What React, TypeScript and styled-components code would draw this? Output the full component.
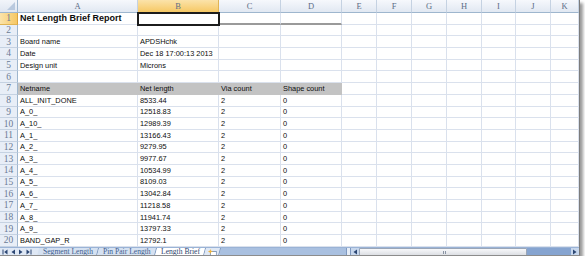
import { Fragment } from "react";
import styled, { createGlobalStyle } from "styled-components";

const GlobalStyle = createGlobalStyle`
  body {
    margin: 0;
    background: #ffffff;
    font-family: "Liberation Sans", Arial, sans-serif;
  }
`;

const COLUMNS = [
  { key: "A", width: 120 },
  { key: "B", width: 81 },
  { key: "C", width: 62 },
  { key: "D", width: 61 },
  { key: "E", width: 35 },
  { key: "F", width: 35 },
  { key: "G", width: 35 },
  { key: "H", width: 35 },
  { key: "I", width: 34 },
  { key: "J", width: 35 },
  { key: "K", width: 28 },
];

const nets: [string, string][] = [
  ["ALL_INIT_DONE", "8533.44"],
  ["A_0_", "12518.83"],
  ["A_10_", "12989.39"],
  ["A_1_", "13166.43"],
  ["A_2_", "9279.95"],
  ["A_3_", "9977.67"],
  ["A_4_", "10534.99"],
  ["A_5_", "8109.03"],
  ["A_6_", "13042.84"],
  ["A_7_", "11218.58"],
  ["A_8_", "11941.74"],
  ["A_9_", "13797.33"],
  ["BAND_GAP_R", "12792.1"],
];

const ROWS: string[][] = [
  ["Net Length Brief Report"],
  [],
  ["Board name", "APDSHchk"],
  ["Date", "Dec 18 17:00:13 2013"],
  ["Design unit", "Microns"],
  [],
  ["Netname", "Net length", "Via count", "Shape count"],
  ...nets.map(([name, len]) => [name, len, "2", "0"]),
];

const Frame = styled.div`
  width: 579px;
  height: 255px;
  border-right: 1px solid #7c7c7c;
  border-bottom: 1px solid #8c8c8c;
  box-shadow: 3px 3px 3px rgba(0, 0, 0, 0.4);
  background: #fff;
  display: flex;
  flex-direction: column;
  overflow: hidden;
`;

const Sheet = styled.div`
  display: grid;
  grid-template-columns: 18px ${COLUMNS.map((c) => `${c.width}px`).join(" ")};
  grid-template-rows: 13px repeat(20, 11.7px);
`;

const Corner = styled.div`
  position: relative;
  background: linear-gradient(#f2f5fa, #dfe6f1);
  border-right: 1px solid #9eb6ce;
  border-bottom: 1px solid #9eb6ce;

  &::after {
    content: "";
    position: absolute;
    right: 2px;
    bottom: 2px;
    border-left: 8px solid transparent;
    border-bottom: 8px solid #b9c9de;
  }
`;

const ColHead = styled.div<{ $active?: boolean }>`
  display: flex;
  align-items: center;
  justify-content: center;
  font-family: "Liberation Serif", "DejaVu Serif", serif;
  font-size: 8.5px;
  color: #5d6d86;
  background: ${(p) =>
    p.$active
      ? "linear-gradient(#fbe3aa, #f6c864)"
      : "linear-gradient(#f6f8fc, #e1e8f2)"};
  border-right: 1px solid ${(p) => (p.$active ? "#e0b454" : "#c5d2e2")};
  border-bottom: 1px solid ${(p) => (p.$active ? "#d9a441" : "#9eb6ce")};
`;

const RowHead = styled.div<{ $active?: boolean }>`
  display: flex;
  align-items: center;
  justify-content: center;
  font-family: "Liberation Serif", "DejaVu Serif", serif;
  font-size: 9.5px;
  color: #6a7a94;
  background: ${(p) =>
    p.$active ? "linear-gradient(90deg, #fbe3aa, #f6c864)" : "#e8eef7"};
  border-right: 1px solid ${(p) => (p.$active ? "#d9a441" : "#9eb6ce")};
  border-bottom: 1px solid ${(p) => (p.$active ? "#e0b454" : "#c5d2e2")};
`;

const Cell = styled.div<{
  $title?: boolean;
  $shade?: boolean;
  $selected?: boolean;
  $underline?: boolean;
}>`
  position: relative;
  display: flex;
  align-items: center;
  padding-left: 2px;
  white-space: nowrap;
  font-size: ${(p) => (p.$title ? "9px" : "7.4px")};
  font-weight: ${(p) => (p.$title ? 700 : 400)};
  color: #0c0c0c;
  background: ${(p) => (p.$shade ? "#c3c3c3" : "#fff")};
  border-right: 1px solid ${(p) => (p.$shade ? "#c3c3c3" : "#dae1ed")};
  border-bottom: ${(p) =>
    p.$underline
      ? "2px solid #9a9a9a"
      : `1px solid ${p.$shade ? "#c3c3c3" : "#dae1ed"}`};
  ${(p) =>
    p.$selected &&
    `
    outline: 2px solid #1c1c1c;
    outline-offset: -1px;
    z-index: 1;
  `}
`;

const TabBar = styled.div`
  display: flex;
  align-items: stretch;
  height: 8px;
  margin-top: 0.6px;
  background: #a9c0e0;
  border-top: 1px solid #9ab3d6;
`;

const NavArrows = styled.div`
  width: 36px;
  display: flex;
  align-items: center;
  padding-left: 2px;
  background: #dfe8f5;
`;

const NavGap = styled.div`
  display: flex;
  gap: 2px;
`;

const TabStrip = styled.div`
  display: flex;
  background: #dfe8f5;
`;

const Tab = styled.div<{ $active?: boolean }>`
  display: flex;
  align-items: center;
  padding: 0 4px 0 5px;
  font-family: "Liberation Serif", "DejaVu Serif", serif;
  font-size: 7.6px;
  line-height: 8px;
  color: ${(p) => (p.$active ? "#2d4670" : "#3f5f8f")};
  background: ${(p) => (p.$active ? "#ffffff" : "#d5e1f1")};
  border-right: 1px solid #7f99c0;
  transform: skewX(-15deg);

  span {
    transform: skewX(15deg);
  }
`;

const NewSheet = styled.div`
  width: 14px;
  display: flex;
  align-items: center;
  justify-content: center;
  background: #dfe8f5;
  border-right: 1px solid #7f99c0;
  transform: skewX(-15deg);

  svg {
    transform: skewX(15deg);
  }
`;

const Filler = styled.div`
  flex: 1;
`;

const Splitter = styled.div`
  width: 3px;
  background: #e6edf7;
  border-left: 1px solid #7f99c0;
  border-right: 1px solid #7f99c0;
`;

const ScrollButton = styled.div`
  width: 8px;
  display: flex;
  align-items: center;
  justify-content: center;
  background: #c6d6ec;
`;

const Thumb = styled.div`
  width: 166px;
  position: relative;
  background: linear-gradient(#f7f8fa, #dcdfe4);
  border: 1px solid #9aa6b8;
  border-radius: 1px;

  &::after {
    content: "";
    position: absolute;
    left: 50%;
    top: 2px;
    width: 3px;
    height: 3px;
    background: repeating-linear-gradient(90deg, #8a94a4 0 1px, transparent 1px 2px);
  }
`;

const Track = styled.div`
  width: 44px;
  background: #86a4d0;
`;

const Triangle = ({ dir, bar }: { dir: "l" | "r"; bar?: boolean }) => (
  <svg width="6" height="6" viewBox="0 0 6 6">
    {dir === "l" ? (
      <>
        {bar && <rect x="0.5" y="0.5" width="1" height="5" fill="#2c4774" />}
        <path d={bar ? "M5.5 0.5 L2.2 3 L5.5 5.5 Z" : "M5 0.5 L1.5 3 L5 5.5 Z"} fill="#2c4774" />
      </>
    ) : (
      <>
        <path d={bar ? "M0.5 0.5 L3.8 3 L0.5 5.5 Z" : "M1 0.5 L4.5 3 L1 5.5 Z"} fill="#2c4774" />
        {bar && <rect x="4.5" y="0.5" width="1" height="5" fill="#2c4774" />}
      </>
    )}
  </svg>
);

export default function App() {
  return (
    <>
      <GlobalStyle />
      <Frame>
        <Sheet>
          <Corner />
          {COLUMNS.map((c) => (
            <ColHead key={c.key} $active={c.key === "B"}>
              {c.key}
            </ColHead>
          ))}
          {ROWS.map((row, r) => (
            <Fragment key={r}>
              <RowHead $active={r === 0}>{r + 1}</RowHead>
              {COLUMNS.map((c, ci) => (
                <Cell
                  key={c.key}
                  $title={r === 0 && ci === 0}
                  $shade={r === 6 && ci < 4}
                  $selected={r === 0 && ci === 1}
                  $underline={r === 0 && (ci === 2 || ci === 3)}
                >
                  {row[ci] ?? ""}
                </Cell>
              ))}
            </Fragment>
          ))}
        </Sheet>
        <TabBar>
          <NavArrows>
            <NavGap>
              <Triangle dir="l" bar />
              <Triangle dir="l" />
              <Triangle dir="r" />
              <Triangle dir="r" bar />
            </NavGap>
          </NavArrows>
          <TabStrip>
            <Tab>
              <span>Segment Length</span>
            </Tab>
            <Tab>
              <span>Pin Pair Length</span>
            </Tab>
            <Tab $active>
              <span>Length Brief</span>
            </Tab>
            <NewSheet>
              <svg width="9" height="7" viewBox="0 0 9 7">
                <rect x="2.5" y="2.5" width="6" height="4" fill="#fff" stroke="#6f88ad" strokeWidth="0.8" />
                <path d="M2.5 0 L3.2 1.8 L5 2.5 L3.2 3.2 L2.5 5 L1.8 3.2 L0 2.5 L1.8 1.8 Z" fill="#f2b53a" />
              </svg>
            </NewSheet>
          </TabStrip>
          <Filler />
          <Splitter />
          <ScrollButton>
            <Triangle dir="l" />
          </ScrollButton>
          <Thumb />
          <Track />
          <ScrollButton>
            <Triangle dir="r" />
          </ScrollButton>
        </TabBar>
      </Frame>
    </>
  );
}
